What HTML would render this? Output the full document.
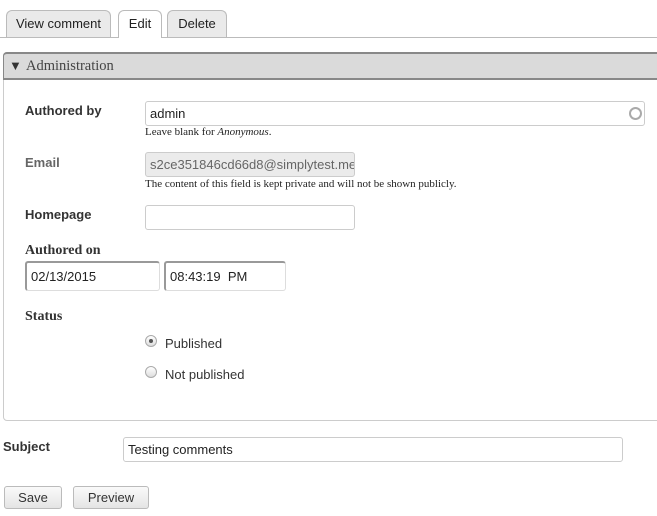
<!DOCTYPE html>
<html><head><style>
body{margin:0;width:657px;height:516px;background:#fff;position:relative;overflow:hidden;font-family:"Liberation Sans",sans-serif;color:#333}
.a{position:absolute}
.tab{position:absolute;top:10px;height:27px;border:1px solid #bbb;border-bottom:none;border-radius:6px 6px 0 0;background:#eaeaea;font-size:13px;line-height:25px;text-align:center;color:#222;box-sizing:border-box}
.lbl{position:absolute;font-size:13px;font-weight:bold;color:#333}
.ser{font-family:"Liberation Serif",serif;font-size:14px;font-weight:bold;color:#333}
.inp{position:absolute;border:1px solid #ccc;border-radius:3px;box-sizing:border-box;font-size:13px;line-height:23px;padding-left:4px;color:#222;background:#fff}
.desc{position:absolute;font-family:"Liberation Serif",serif;font-size:11px;color:#222}
.radio{position:absolute;width:11px;height:11px;border-radius:50%;border:1px solid #aaa;background:linear-gradient(#fff,#ddd);box-sizing:border-box}
.btn{position:absolute;top:486px;height:23px;border:1px solid #bbb;border-radius:3px;background:linear-gradient(#fafafa,#e4e4e4);box-sizing:border-box;font-size:13px;line-height:21px;text-align:center;color:#333}
</style></head><body>
<div class="a" style="left:0;top:37px;width:657px;height:1px;background:#bbb"></div>
<div class="tab" style="left:6px;width:105px">View comment</div>
<div class="tab" style="left:118px;width:44px;background:#fff;height:28px">Edit</div>
<div class="tab" style="left:167px;width:60px">Delete</div>

<div class="a" style="left:3px;top:52px;width:660px;height:369px;border:1px solid #ccc;border-radius:4px;box-sizing:border-box"></div>
<div class="a" style="left:3px;top:52px;width:660px;height:28px;background:#dadada;border:1px solid #888;border-width:2px 0 2px 1px;box-sizing:border-box;border-radius:4px 0 0 0"></div>
<div class="a" style="left:9px;top:58px;font-size:13px;color:#333">▼</div>
<div class="a" style="left:26px;top:58px;font-family:'Liberation Serif',serif;font-size:14.5px;color:#444">Administration</div>

<div class="lbl" style="left:25px;top:103px">Authored by</div>
<div class="inp" style="left:145px;top:101px;width:500px;height:25px">admin</div>
<div class="a" style="left:629px;top:107px;width:9px;height:9px;border:2px solid #aaa;border-radius:50%"></div>
<div class="desc" style="left:145px;top:126px">Leave blank for <i>Anonymous</i>.</div>

<div class="lbl" style="left:25px;top:155px;color:#666">Email</div>
<div class="inp" style="left:145px;top:152px;width:210px;height:25px;background:#ebebeb;color:#666;overflow:hidden;white-space:nowrap">s2ce351846cd66d8@simplytest.me</div>
<div class="desc" style="left:145px;top:178px">The content of this field is kept private and will not be shown publicly.</div>

<div class="lbl" style="left:25px;top:207px">Homepage</div>
<div class="inp" style="left:145px;top:205px;width:210px;height:25px"></div>

<div class="a ser" style="left:25px;top:243px">Authored on</div>
<div class="inp" style="left:25px;top:261px;width:135px;height:30px;line-height:28px;border-color:#999 #ddd #ddd #999;border-width:2px 1px 1px 2px">02/13/2015</div>
<div class="inp" style="left:164px;top:261px;width:122px;height:30px;line-height:28px;border-color:#999 #ddd #ddd #999;border-width:2px 1px 1px 2px;white-space:pre">08:43:19  PM</div>

<div class="a ser" style="left:25px;top:309px">Status</div>
<div class="radio" style="left:145px;top:335px;width:12px;height:12px"><div class="a" style="left:3px;top:3px;width:4px;height:4px;border-radius:50%;background:#555"></div></div>
<div class="a" style="left:165px;top:336px;font-size:13px">Published</div>
<div class="radio" style="left:145px;top:366px;width:12px;height:12px"></div>
<div class="a" style="left:165px;top:367px;font-size:13px">Not published</div>

<div class="lbl" style="left:3px;top:439px">Subject</div>
<div class="inp" style="left:123px;top:437px;width:500px;height:25px">Testing comments</div>

<div class="btn" style="left:4px;width:58px">Save</div>
<div class="btn" style="left:73px;width:76px">Preview</div>
</body></html>
